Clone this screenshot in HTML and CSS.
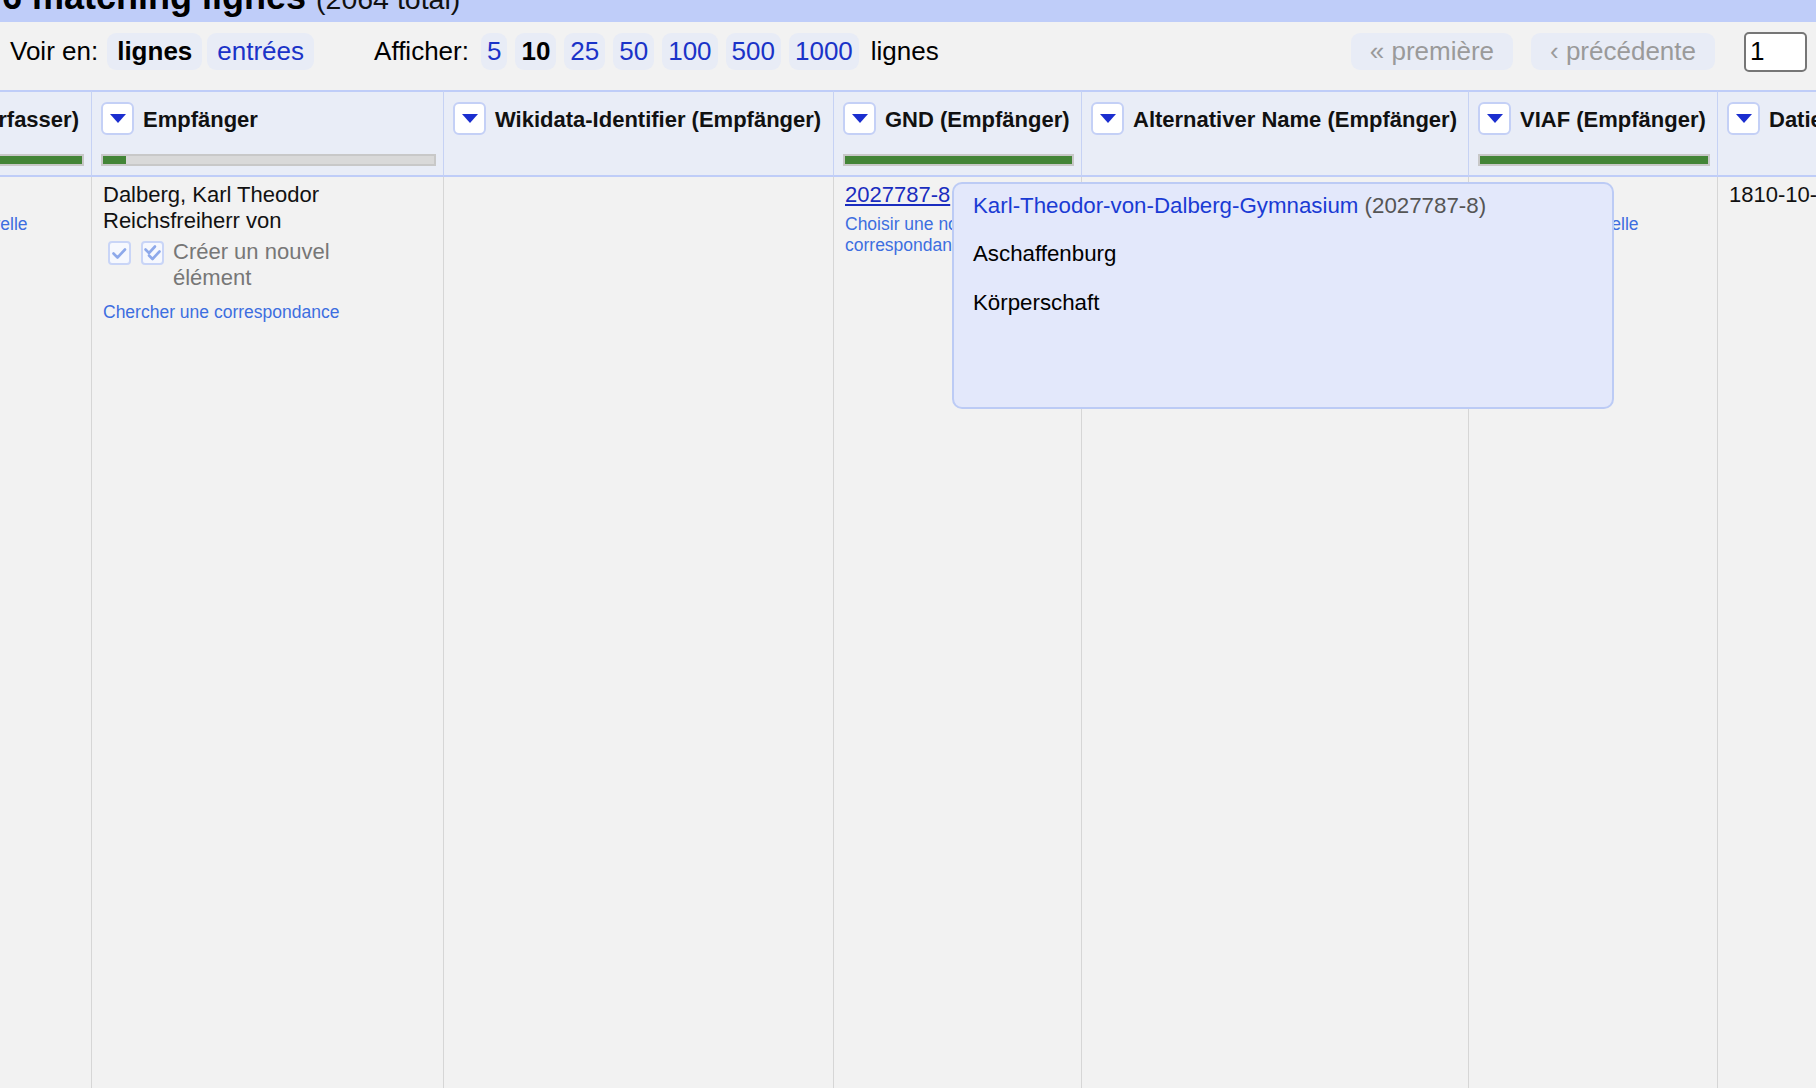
FILE: index.html
```html
<!DOCTYPE html>
<html lang="fr">
<head>
<meta charset="utf-8">
<title>OpenRefine</title>
<link rel="stylesheet" href="styles.css">
</head>
<body>
<div class="summary">
  <h1 class="summary-title">6 matching lignes <span class="total">(2064 total)</span></h1>
</div>
<div class="toolbar">
  <div class="group view">
    <span class="label">Voir en:</span>
    <span class="pill sel">lignes</span>
    <span class="pill link">entrées</span>
  </div>
  <div class="group size">
    <span class="label first">Afficher:</span>
    <span class="pill link">5</span>
    <span class="pill sel">10</span>
    <span class="pill link">25</span>
    <span class="pill link">50</span>
    <span class="pill link">100</span>
    <span class="pill link">500</span>
    <span class="pill link">1000</span>
    <span class="label last">lignes</span>
  </div>
  <div class="group pager">
    <span class="pill disabled">« première</span>
    <span class="pill disabled">‹ précédente</span>
    <input class="page-input" type="text" value="1">
  </div>
</div>
<div class="grid-wrap">
  <div class="grid">
    <div class="hcell">
      <div class="htop"><span class="dd"><svg width="16" height="9" viewBox="0 0 16 9"><polygon points="0,0 16,0 8,9" fill="#1b2ecf"/></svg></span><span class="htitle">VIAF (Verfasser)</span></div>
      <div class="bar"><div class="fill full"></div></div>
    </div>
    <div class="hcell">
      <div class="htop"><span class="dd"><svg width="16" height="9" viewBox="0 0 16 9"><polygon points="0,0 16,0 8,9" fill="#1b2ecf"/></svg></span><span class="htitle">Empfänger</span></div>
      <div class="bar"><div class="fill small"></div></div>
    </div>
    <div class="hcell">
      <div class="htop"><span class="dd"><svg width="16" height="9" viewBox="0 0 16 9"><polygon points="0,0 16,0 8,9" fill="#1b2ecf"/></svg></span><span class="htitle">Wikidata-Identifier (Empfänger)</span></div>
    </div>
    <div class="hcell">
      <div class="htop"><span class="dd"><svg width="16" height="9" viewBox="0 0 16 9"><polygon points="0,0 16,0 8,9" fill="#1b2ecf"/></svg></span><span class="htitle">GND (Empfänger)</span></div>
      <div class="bar"><div class="fill full"></div></div>
    </div>
    <div class="hcell">
      <div class="htop"><span class="dd"><svg width="16" height="9" viewBox="0 0 16 9"><polygon points="0,0 16,0 8,9" fill="#1b2ecf"/></svg></span><span class="htitle">Alternativer Name (Empfänger)</span></div>
    </div>
    <div class="hcell">
      <div class="htop"><span class="dd"><svg width="16" height="9" viewBox="0 0 16 9"><polygon points="0,0 16,0 8,9" fill="#1b2ecf"/></svg></span><span class="htitle">VIAF (Empfänger)</span></div>
      <div class="bar"><div class="fill full"></div></div>
    </div>
    <div class="hcell">
      <div class="htop"><span class="dd"><svg width="16" height="9" viewBox="0 0 16 9"><polygon points="0,0 16,0 8,9" fill="#1b2ecf"/></svg></span><span class="htitle">Datierung</span></div>
    </div>

    <div class="bcell">
      <a class="match">56610213</a>
      <div class="actions">Choisir une nouvelle correspondance</div>
    </div>
    <div class="bcell">
      <div class="value">Dalberg, Karl Theodor Reichsfreiherr von</div>
      <div class="candidate">
        <span class="cb"><svg width="23" height="24" viewBox="0 0 23 24"><rect x="1" y="1" width="21" height="22" rx="3" fill="#f6f8fe" stroke="#c9d5f7" stroke-width="2"/><polyline points="5.5,12.5 9.5,16.5 17,8.5" fill="none" stroke="#8ea9ea" stroke-width="2.6" stroke-linecap="round" stroke-linejoin="round"/></svg></span>
        <span class="cb cb2"><svg width="23" height="24" viewBox="0 0 23 24"><rect x="1" y="1" width="21" height="22" rx="3" fill="#f6f8fe" stroke="#c9d5f7" stroke-width="2"/><polyline points="4.5,8.5 8,12 14,5.5" fill="none" stroke="#8ea9ea" stroke-width="2.6" stroke-linecap="round" stroke-linejoin="round"/><polyline points="8,14.5 11.5,18 18.5,10.5" fill="none" stroke="#8ea9ea" stroke-width="2.6" stroke-linecap="round" stroke-linejoin="round"/></svg></span>
        <span class="cand-text">Créer un nouvel élément</span>
      </div>
      <div class="actions search">Chercher une correspondance</div>
    </div>
    <div class="bcell"></div>
    <div class="bcell">
      <a class="match">2027787-8</a>
      <div class="actions">Choisir une nouvelle correspondance</div>
    </div>
    <div class="bcell"></div>
    <div class="bcell">
      <a class="match">137445785</a>
      <div class="actions">Choisir une nouvelle correspondance</div>
    </div>
    <div class="bcell">
      <div class="value">1810-10-05</div>
    </div>
  </div>
</div>
<div class="popup">
  <div class="pline"><span class="plink">Karl-Theodor-von-Dalberg-Gymnasium</span> <span class="pid">(2027787-8)</span></div>
  <div class="pline">Aschaffenburg</div>
  <div class="pline">Körperschaft</div>
</div>
</body>
</html>
```

FILE: styles.css
```css
html, body {
  margin: 0;
  padding: 0;
  height: 100%;
  overflow: hidden;
}

body {
  position: relative;
  font-family: "Liberation Sans", Arial, Helvetica, sans-serif;
  background: #f2f2f2;
  color: #000;
}

/* summary band */
.summary {
  height: 22px;
  background: #bfcdf9;
  overflow: hidden;
}

.summary-title {
  margin: -21px 0 0 2px;
  font-size: 36px;
  line-height: 36px;
  font-weight: bold;
  white-space: nowrap;
  color: #000;
}

.summary-title .total {
  font-weight: normal;
  font-size: 28.5px;
  color: #111;
}

/* toolbar */
.toolbar {
  height: 68px;
  box-sizing: border-box;
  padding: 0 9px 9px 10px;
  display: flex;
  align-items: center;
  font-size: 26px;
  white-space: nowrap;
}

.group {
  display: flex;
  align-items: center;
}

.view {
  gap: 5px;
}

.view .label {
  margin-right: 4px;
}

.size {
  margin-left: 60px;
  gap: 8px;
}

.size .first {
  margin-right: 4px;
}

.size .last {
  margin-left: 4px;
}

.pager {
  margin-left: auto;
  gap: 18px;
}

.pill {
  display: inline-block;
  height: 37px;
  line-height: 37px;
  padding: 0 10px;
  border-radius: 9px;
  background: #e8ecf6;
}

.pill.sel {
  font-weight: bold;
  color: #000;
}

.pill.link {
  color: #1a33c8;
}

.size .pill {
  padding: 0 6px;
}

.pager .pill {
  padding: 0 19px;
  color: #9a9a9a;
}

.page-input {
  margin-left: 11px;
  width: 63px;
  height: 40px;
  box-sizing: border-box;
  border: 2px solid #767676;
  border-radius: 5px;
  background: #fff;
  font-family: "Liberation Sans", Arial, sans-serif;
  font-size: 26px;
  padding: 0 4px;
  color: #000;
}

/* grid */
.grid-wrap {
  height: calc(100% - 90px);
  overflow: hidden;
}

.grid {
  display: grid;
  grid-template-columns: 234px 352px 390px 248px 387px 249px 330px;
  grid-template-rows: 87px 1fr;
  height: 100%;
  margin-left: -142px;
  width: max-content;
}

.hcell {
  box-sizing: border-box;
  background: #e9edf7;
  border-top: 2px solid #bfcdf8;
  border-bottom: 2px solid #bfcdf8;
  border-right: 1px solid #c6d2f4;
  padding: 10px 7px 0 9px;
  overflow: hidden;
}

.htop {
  display: flex;
  align-items: center;
  gap: 9px;
  height: 33px;
}

.dd {
  flex: none;
  width: 33px;
  height: 33px;
  box-sizing: border-box;
  border: 2px solid #c4d0f6;
  border-radius: 6px;
  background: #fff;
  display: flex;
  align-items: center;
  justify-content: center;
}

.htitle {
  padding-top: 3px;
  font-size: 22px;
  font-weight: bold;
  white-space: nowrap;
  color: #111;
}

.bar {
  margin-top: 19px;
  height: 12px;
  box-sizing: border-box;
  border: 2px solid #c8c8c8;
  background: #d9d9d9;
}

.fill {
  height: 100%;
  background: #438537;
}

.fill.full {
  width: 100%;
}

.fill.small {
  width: 7%;
}

.bcell {
  box-sizing: border-box;
  border-right: 1px solid #d6d6d6;
  padding: 5px 10px 4px 11px;
  font-size: 22px;
  line-height: 26.4px;
  overflow: hidden;
}

.value {
  color: #111;
}

.match {
  color: #1a2dbf;
  text-decoration: underline;
  white-space: nowrap;
}

.actions {
  margin-top: 6px;
  font-size: 17.5px;
  line-height: 21px;
  color: #3d6ee0;
}

.actions.search {
  margin-top: 10px;
}

.candidate {
  display: flex;
  align-items: flex-start;
  margin-top: 4px;
}

.cb {
  flex: none;
  display: block;
  height: 24px;
  margin-top: 2px;
  margin-left: 5px;
}

.cb svg {
  display: block;
}

.cb2 {
  margin-left: 10px;
}

.cand-text {
  margin-left: 9px;
  max-width: 200px;
  color: #777;
}

/* candidate popup */
.popup {
  position: absolute;
  left: 952px;
  top: 182px;
  width: 662px;
  height: 227px;
  box-sizing: border-box;
  background: #e3e8fb;
  border: 2px solid #bccbf5;
  border-radius: 10px;
  padding: 9px 19px;
  font-size: 22.3px;
  line-height: 26.4px;
}

.pline {
  margin-bottom: 22px;
  color: #000;
  white-space: nowrap;
}

.plink {
  color: #1a3bd4;
}

.pid {
  color: #555;
}
```
